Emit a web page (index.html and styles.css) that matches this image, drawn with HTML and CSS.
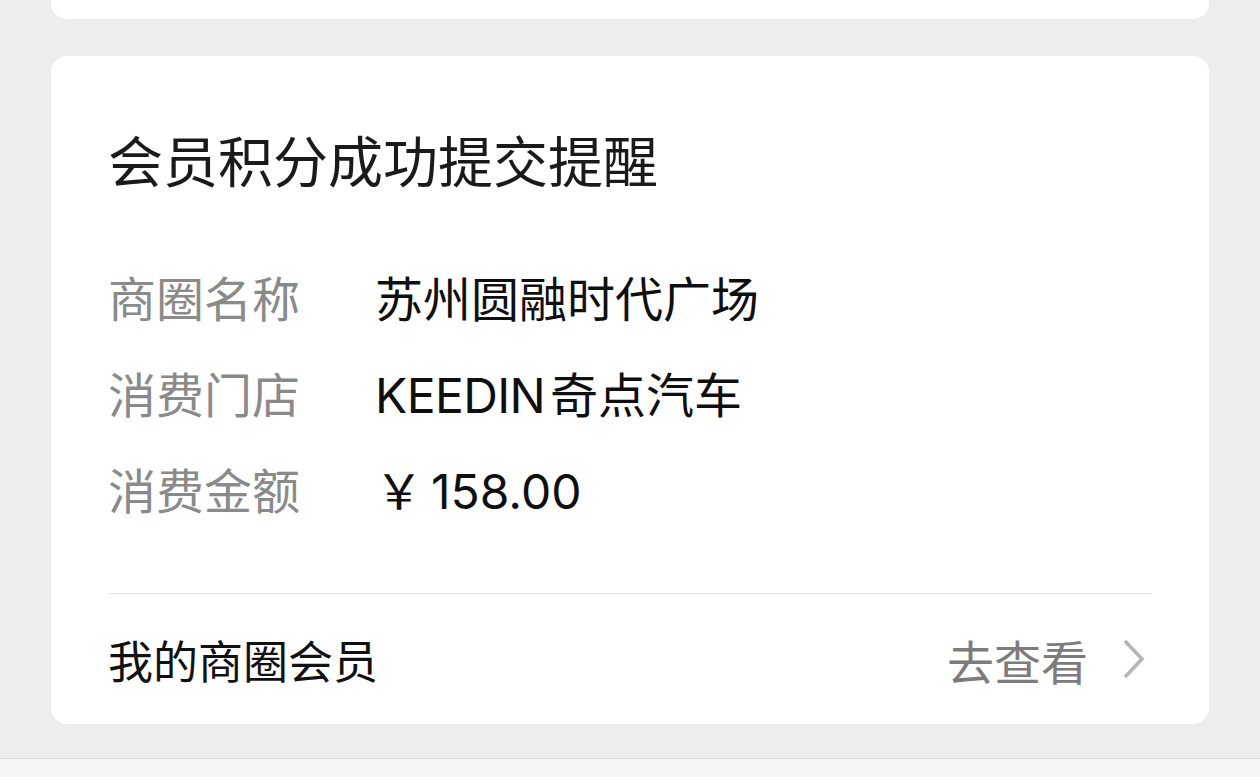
FILE: index.html
```html
<!DOCTYPE html>
<html lang="zh-CN">
<head>
<meta charset="utf-8">
<title>会员积分成功提交提醒</title>
<link rel="stylesheet" href="styles.css">
</head>
<body>
<div class="page">
  <div class="card card-prev"></div>
  <div class="card card-main">
    <h1 class="title">会员积分成功提交提醒</h1>
    <div class="rows">
      <div class="row"><span class="label">商圈名称</span><span class="value">苏州圆融时代广场</span></div>
      <div class="row"><span class="label">消费门店</span><span class="value"><span class="latin">KEEDIN</span><span class="cjk-after">奇点汽车</span></span></div>
      <div class="row"><span class="label">消费金额</span><span class="value">￥<span class="amount">158.00</span></span></div>
    </div>
    <div class="link-row">
      <span class="link-title">我的商圈会员</span>
      <span class="link-action">去查看
        <svg class="chevron" width="24" height="40" viewBox="0 0 24 40"><polyline points="3,2 20,20 3,38" fill="none" stroke="#b5b5b5" stroke-width="3.6"/></svg>
      </span>
    </div>
  </div>
</div>
<div class="bottom-bar"></div>
</body>
</html>
```
FILE: styles.css
```css
html, body {
  margin: 0;
  padding: 0;
}
body {
  width: 1260px;
  height: 777px;
  overflow: hidden;
  background: #ededed;
  font-family: Inter, "Noto Sans CJK SC", sans-serif;
  display: flex;
  flex-direction: column;
}
.page {
  flex: 1;
  padding: 0 51px;
  display: flex;
  flex-direction: column;
  gap: 37px;
}
.card {
  background: #fff;
  border-radius: 16px;
}
.card-prev {
  height: 19px;
  border-top-left-radius: 0;
  border-top-right-radius: 0;
}
.card-main {
  height: 668px;
  box-sizing: border-box;
  padding: 68px 57px 0;
  display: flex;
  flex-direction: column;
}
.title {
  margin: 0;
  font-size: 55px;
  font-weight: 400;
  line-height: 76px;
  color: #1a1a1a;
  letter-spacing: 0;
}
.rows {
  margin-top: 52px;
  display: flex;
  flex-direction: column;
}
.row {
  display: flex;
  height: 96px;
  align-items: center;
  font-size: 48px;
  line-height: 96px;
}
.label {
  width: 267px;
  color: #8a8a8a;
  flex: none;
}
.value {
  color: #0f0f0f;
}
.latin {
  letter-spacing: -0.6px;
}
.cjk-after {
  margin-left: 5px;
}
.amount {
  margin-left: 8px;
}
.link-row {
  margin-top: 53px;
  border-top: 1px solid #e5e5e5;
  flex: 1;
  display: flex;
  align-items: center;
  justify-content: space-between;
}
.link-title {
  font-size: 45px;
  color: #111;
}
.link-action {
  font-size: 47px;
  color: #7c7c7c;
  display: flex;
  align-items: center;
  gap: 34px;
  padding-right: 6px;
}
.chevron {
  display: block;
}
.bottom-bar {
  height: 18px;
  border-top: 1px solid #dcdcdc;
  background: #f6f6f6;
}
```
